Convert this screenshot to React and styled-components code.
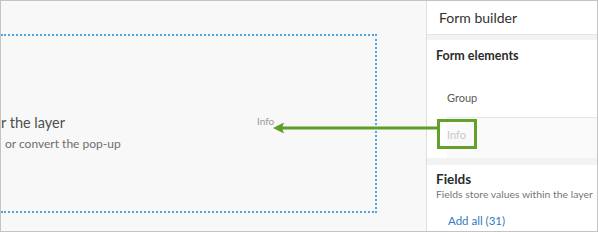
import styled, { createGlobalStyle } from "styled-components";

const GlobalStyle = createGlobalStyle`
  html, body {
    margin: 0;
    padding: 0;
    background: #ffffff;
  }
  body {
    font-family: Lato, "Noto Sans", "Liberation Sans", sans-serif;
  }
`;

const Frame = styled.div`
  position: relative;
  box-sizing: border-box;
  width: 598px;
  height: 232px;
  border: 1px solid #c4c4c4;
  display: flex;
  overflow: hidden;
  background: #f8f8f8;
`;

const Canvas = styled.div`
  flex: 1;
  padding-top: 33px;
  overflow: hidden;
`;

const DropZone = styled.div`
  box-sizing: border-box;
  width: 376px;
  height: 179px;
  border: 2px dotted #4ba6e2;
  border-left: none;
  padding-top: 77px;
`;

const EmptyTitle = styled.div`
  font-size: 14.5px;
  line-height: 20px;
  color: #4f4f4f;
  white-space: nowrap;
`;

const EmptyText = styled.div`
  margin-top: 3px;
  padding-left: 4px;
  font-size: 12px;
  line-height: 16px;
  color: #6e6e6e;
  white-space: nowrap;
`;

const DragGhost = styled.span`
  position: absolute;
  left: 256px;
  top: 113px;
  font-size: 10px;
  line-height: 14px;
  color: #9a9a9a;
`;

const Panel = styled.aside`
  width: 170px;
  flex-shrink: 0;
  border-left: 1px solid #dedede;
  background: #ffffff;
  display: flex;
  flex-direction: column;
  overflow: hidden;

  & > * {
    flex-shrink: 0;
  }
`;

const PanelHeader = styled.div`
  height: 33px;
  border-bottom: 1px solid #e4e4e4;
  padding-left: 12px;
  display: flex;
  align-items: center;
  font-size: 14px;
  color: #323232;
`;

const Gap = styled.div`
  height: ${(p) => p.$h}px;
  background: #f3f3f3;
`;

const Section = styled.section`
  display: flex;
  flex-direction: column;
  padding-top: ${(p) => p.$top}px;

  & > * {
    flex-shrink: 0;
  }
`;

const SectionTitle = styled.div`
  padding-left: 9px;
  font-size: ${(p) => p.$size}px;
  line-height: 16px;
  font-weight: 700;
  color: #2b2b2b;
`;

const SectionHint = styled.div`
  padding-left: 9px;
  font-size: 10.4px;
  line-height: 14px;
  color: #777777;
  white-space: nowrap;
`;

const ElementRow = styled.div`
  height: 40px;
  margin-top: ${(p) => p.$mt || 0}px;
  padding-left: 20px;
  display: flex;
  align-items: center;
  font-size: 11px;
  color: #595959;
`;

const InfoRow = styled.div`
  height: 40px;
  margin-left: 20px;
  border-top: 1px solid #e6e6e6;
  background: #fafafa;
  position: relative;
`;

const Highlight = styled.div`
  position: absolute;
  left: -10px;
  top: 1px;
  box-sizing: border-box;
  width: 40px;
  height: 30px;
  border: 3px solid #62a22c;
  padding-left: 7px;
  display: flex;
  align-items: center;
  font-size: 11px;
  color: #c8c8c8;
`;

const AddAll = styled.a`
  margin-top: 12px;
  padding-left: 21px;
  font-size: 11.5px;
  line-height: 16px;
  color: #2f7cc0;
  text-decoration: none;
`;

const Arrow = styled.svg`
  position: absolute;
  left: 272px;
  top: 120px;
  pointer-events: none;
`;

export default function App() {
  return (
    <>
      <GlobalStyle />
      <Frame>
        <Canvas>
          <DropZone>
            <EmptyTitle>r the layer</EmptyTitle>
            <EmptyText>or convert the pop-up</EmptyText>
          </DropZone>
        </Canvas>
        <Panel>
          <PanelHeader>Form builder</PanelHeader>
          <Gap $h={5} />
          <Section $top={8}>
            <SectionTitle $size={12.5}>Form elements</SectionTitle>
            <ElementRow $mt={13}>Group</ElementRow>
            <InfoRow>
              <Highlight>Info</Highlight>
            </InfoRow>
          </Section>
          <Gap $h={7} />
          <Section $top={6}>
            <SectionTitle $size={13.5}>Fields</SectionTitle>
            <SectionHint>Fields store values within the layer</SectionHint>
            <AddAll href="#">Add all (31)</AddAll>
          </Section>
        </Panel>
        <DragGhost>Info</DragGhost>
        <Arrow width="166" height="14" viewBox="0 0 166 14">
          <path d="M9 5.5 H166 V8.5 H9 Z" fill="#5c9e28" />
          <path d="M0 7 L11 1.5 L9 7 L11 12.5 Z" fill="#5c9e28" />
        </Arrow>
      </Frame>
    </>
  );
}
